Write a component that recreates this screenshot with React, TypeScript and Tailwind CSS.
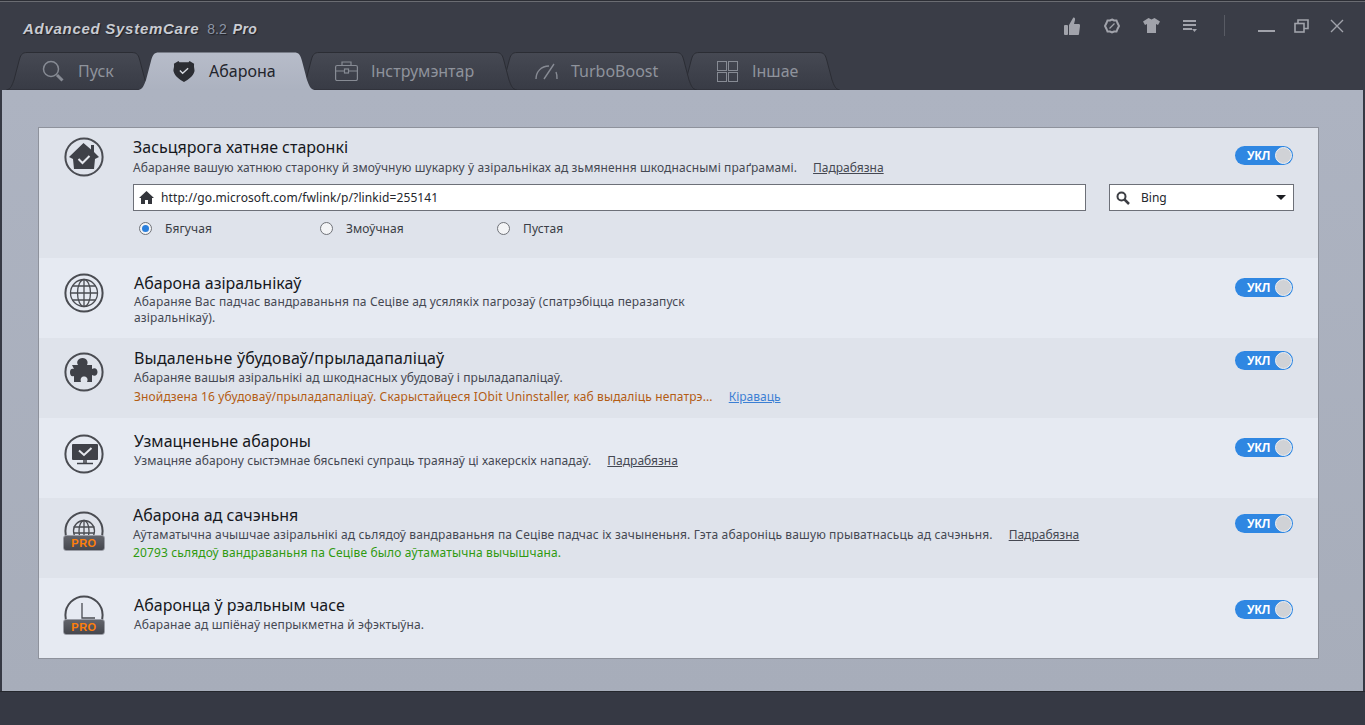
import type { ReactNode } from "react";

const FONT = "font-['Noto_Sans','Liberation_Sans',sans-serif]";

function TabShape({ w, active }: { w: number; active?: boolean }) {
  const id = active ? "tab-on" : "tab-off";
  const d = `M0.5 38 C5 37 6 33 8 28 L13 9 C14.5 3 16 0.5 21 0.5 L${w - 21} 0.5 C${w - 16} 0.5 ${w - 14.5} 3 ${w - 13} 9 L${w - 8} 28 C${w - 6} 33 ${w - 5} 37 ${w - 0.5} 38 Z`;
  return (
    <svg className="absolute inset-0" width={w} height={38} viewBox={`0 0 ${w} 38`}>
      <defs>
        <linearGradient id={id} x1="0" y1="0" x2="0" y2="1">
          <stop offset="0" stopColor={active ? "#b7bcc9" : "#464953"} />
          <stop offset="1" stopColor={active ? "#acb2c0" : "#383b45"} />
        </linearGradient>
      </defs>
      <path d={d} fill={`url(#${id})`} stroke={active ? "none" : "#2b2d34"} />
    </svg>
  );
}

function Tab({
  w,
  children,
  active,
  className,
}: {
  w: number;
  children: ReactNode;
  active?: boolean;
  className: string;
}) {
  return (
    <div className={`relative h-[38px] shrink-0 ${className}`}>
      <TabShape w={w} active={active} />
      <div
        className={`relative flex h-full items-center text-base ${
          active ? "text-[#23252c]" : "text-[#8f939c]"
        }`}
      >
        {children}
      </div>
    </div>
  );
}

function Toggle() {
  return (
    <div className="flex h-[19px] w-[58px] items-center justify-between rounded-full bg-[#2f87e2] pl-[12px] pr-[1px]">
      <span className="font-['Liberation_Sans',sans-serif] text-xs leading-none font-bold text-white">УКЛ</span>
      <span className="h-[17px] w-[17px] rounded-full border border-[#f0f1f3] bg-[#d0d2d6]" />
    </div>
  );
}

function RoundIcon({ children, pro }: { children: ReactNode; pro?: boolean }) {
  return (
    <div className="relative h-[40px] w-[42px]">
      <svg width="42" height="40" viewBox="0 0 42 40" fill="none">
        <circle cx="21" cy="20" r="18.6" stroke="#4a4c52" strokeWidth="2" />
        {children}
      </svg>
      {pro && (
        <div className="absolute top-[24px] left-0 flex h-[16px] w-[42px] items-center justify-center rounded-[3px] border border-[#9a9da6] bg-gradient-to-b from-[#62646b] to-[#45474e] font-['Liberation_Sans',sans-serif] text-[11px] font-bold tracking-[0.5px] text-[#ff7f0a]">
          PRO
        </div>
      )}
    </div>
  );
}

function Radio({ on, label, className }: { on?: boolean; label: string; className: string }) {
  return (
    <div className={`flex items-center ${className}`}>
      <span className="flex h-[13px] w-[13px] items-center justify-center rounded-full border border-[#6f7278] bg-[#f3f4f6]">
        {on && <span className="h-[7px] w-[7px] rounded-full bg-[#2a7fdc]" />}
      </span>
      <span className="ml-[13px] text-xs leading-none tracking-[0.1px] text-[#3a3d45]">{label}</span>
    </div>
  );
}

function Row({
  dark,
  icon,
  iconTop,
  textClass,
  toggleTop,
  title,
  titleClass = "",
  descClass,
  children,
}: {
  dark?: boolean;
  icon: ReactNode;
  iconTop: string;
  textClass: string;
  toggleTop: string;
  title: string;
  titleClass?: string;
  descClass: string;
  children: ReactNode;
}) {
  return (
    <div className={`flex h-[80px] ${dark ? "bg-[#dfe3eb]" : "bg-[#e6eaf2]"}`}>
      <div className={`w-[94px] shrink-0 pl-[24px] ${iconTop}`}>{icon}</div>
      <div className={`min-w-0 flex-1 ${textClass}`}>
        <div className={`text-base leading-[20px] text-[#16181d] ${titleClass}`}>{title}</div>
        <div className={`text-xs leading-[16px] text-[#454852] ${descClass}`}>{children}</div>
      </div>
      <div className={`w-[83px] shrink-0 ${toggleTop}`}>
        <Toggle />
      </div>
    </div>
  );
}

function More() {
  return <span className="ml-[16px] tracking-normal underline">Падрабязна</span>;
}

export default function App() {
  return (
    <div className={`flex h-[725px] w-[1365px] flex-col overflow-hidden bg-[#363944] ${FONT}`}>
      <header className="h-[90px] shrink-0 border-t border-[#2c2e35] bg-[#3a3d47]">
        <div className="flex h-[51px] items-start border-t border-[#6a6c72]">
          <div className="flex items-baseline pt-[16px] pl-[23px] font-['Liberation_Sans',sans-serif] text-[#c9ccd3] [text-shadow:1px_1px_1px_#1f2026]">
            <span className="text-[15px] font-bold tracking-[0.72px] italic">Advanced SystemCare</span>
            <span className="ml-[8px] text-[14px] text-[#8d96a6]">8.2</span>
            <span className="ml-[6px] text-[14px] font-bold tracking-[0.4px] italic">Pro</span>
          </div>
          <div className="ml-auto flex items-center pt-[13px] pr-[21px] text-[#a1a3ab]">
            <svg width="16" height="18" viewBox="0 0 16 18" fill="currentColor">
              <rect x="0" y="8" width="4" height="10" rx="1" />
              <path d="M5 8 L9 1 C10 0 11.5 1 11 3 L10 7 L15 7 C16 7 16 8 16 9 L15 17 C15 18 14 18 13.5 18 L5 18 Z" />
            </svg>
            <svg className="ml-[24px]" width="16" height="16" viewBox="0 0 16 16" fill="none" stroke="currentColor">
              <path strokeWidth="2" d="M8 1.5 L10 2.5 L12.5 2.5 L13.5 5 L15 8 L13.5 11 L12.5 13.5 L10 13.5 L8 14.5 L6 13.5 L3.5 13.5 L2.5 11 L1 8 L2.5 5 L3.5 2.5 L6 2.5 Z" />
              <path strokeWidth="1.3" d="M10.5 5.5 L5.5 10.5" />
            </svg>
            <svg className="ml-[23px]" width="17" height="15" viewBox="0 0 17 15" fill="currentColor">
              <path d="M5.5 0 L8.5 1.5 L11.5 0 L17 3.5 L15 7 L13 6 L13 15 L4 15 L4 6 L2 7 L0 3.5 Z" />
            </svg>
            <svg className="ml-[23px]" width="14" height="14" viewBox="0 0 14 14" fill="currentColor">
              <rect x="0" y="1" width="13" height="2" />
              <rect x="0" y="5" width="13" height="2" />
              <rect x="0" y="9" width="9" height="2" />
              <path d="M9 10 L14 10 L11.5 13 Z" />
            </svg>
            <div className="ml-[27px] h-[21px] w-px bg-[#585b64]" />
            <div className="mt-[10px] ml-[33px] h-[2px] w-[17px] bg-[#a1a3ab]" />
            <svg className="ml-[19px]" width="15" height="14" viewBox="0 0 15 14" fill="none" stroke="currentColor" strokeWidth="1.6">
              <rect x="1" y="4.5" width="9" height="8.5" />
              <path d="M4 4.5 L4 1 L14 1 L14 9.5 L10 9.5" />
            </svg>
            <svg className="ml-[21px]" width="14" height="14" viewBox="0 0 14 14" fill="none" stroke="currentColor" strokeWidth="1.4">
              <path d="M1 1 L13 13 M13 1 L1 13" />
            </svg>
          </div>
        </div>
        <div className="flex pl-[6px]">
          <Tab className="z-10 w-[147px]" w={147}>
            <svg className="ml-[36px]" width="22" height="22" viewBox="0 0 22 22" fill="none" stroke="#878b94">
              <circle cx="9" cy="9" r="7.5" strokeWidth="1.5" />
              <path d="M15 15 L20.5 20.5" strokeWidth="3" />
            </svg>
            <span className="ml-[14px]">Пуск</span>
          </Tab>
          <Tab className="z-40 -ml-[15px] w-[177px]" w={177} active>
            <svg className="ml-[34px]" width="24" height="22" viewBox="0 0 24 24" fill="#2b2d33">
              <path d="M1 4 L6 1 L7 2.5 L17 2.5 L18 1 L23 4 C22.5 8 23.5 9 23.5 12 C22 18 17 21 12 24 C7 21 2 18 0.5 12 C0.5 9 1.5 8 1 4 Z" />
              <path d="M7.5 11.5 L10.5 14.5 L16.5 9" fill="none" stroke="#d7dae1" strokeWidth="1.5" />
            </svg>
            <span className="ml-[13px]">Абарона</span>
          </Tab>
          <Tab className="z-30 -ml-[17px] w-[219px]" w={219}>
            <svg className="ml-[37px]" width="23" height="20" viewBox="0 0 23 20" fill="none" stroke="#878b94" strokeWidth="1.2">
              <rect x="0.6" y="4.5" width="21.8" height="15" rx="1.5" />
              <path d="M7 4.5 L7 1 L16 1 L16 4.5 M0.6 10 L9.5 10 M13.5 10 L22.4 10" />
              <rect x="9.5" y="8" width="4" height="4" />
            </svg>
            <span className="ml-[13px]">Інструмэнтар</span>
          </Tab>
          <Tab className="z-20 -ml-[21px] w-[201px]" w={201}>
            <svg className="ml-[39px]" width="23" height="17" viewBox="0 0 23 17" fill="none" stroke="#878b94" strokeWidth="1.4">
              <path d="M1 16 C1 9 6 3 14 3 M21 9 C22 11 22 14 22 16 M9 16 L19 1" />
            </svg>
            <span className="ml-[13px]">TurboBoost</span>
          </Tab>
          <Tab className="z-10 -ml-[19px] w-[162px]" w={162}>
            <svg className="ml-[39px]" width="21" height="21" viewBox="0 0 21 21" fill="none" stroke="#878b94">
              <rect x="0.5" y="0.5" width="9" height="9" />
              <rect x="11.5" y="0.5" width="9" height="9" />
              <rect x="0.5" y="11.5" width="9" height="9" />
              <rect x="11.5" y="11.5" width="9" height="9" />
            </svg>
            <span className="ml-[14px]">Іншае</span>
          </Tab>
        </div>
      </header>

      <main className="mx-[2px] h-[601px] shrink-0 bg-gradient-to-b from-[#adb3c1] to-[#a7adba] pt-[37px] pl-[36px]">
        <div className="w-[1281px] border border-[#8e929c] bg-[#e6eaf2]">
          <div className="h-[130px] bg-[#dfe3eb]">
            <div className="flex">
              <div className="w-[94px] shrink-0 pt-[9px] pl-[24px]">
                <RoundIcon>
                  <path d="M20.5 6 L28 12.5 L28 8 L31 8 L31 15 L36 20 L32 22 L31 32 L11 32 L10 22 L6 20 Z" fill="#3f4148" />
                  <path d="M15.5 22 L19.5 26 L26.5 19" stroke="#e6e8ee" strokeWidth="2" />
                </RoundIcon>
              </div>
              <div className="min-w-0 flex-1 pt-[9px]">
                <div className="text-base leading-[20px] text-[#16181d]">Засьцярога хатняе старонкі</div>
                <div className="mt-[3px] text-xs leading-[16px] tracking-[0.1px] text-[#454852]">
                  Абараняе вашую хатнюю старонку й змоўчную шукарку ў азіральніках ад зьмянення шкоднаснымі праґрамамі.
                  <More />
                </div>
              </div>
              <div className="w-[83px] shrink-0 pt-[18px]">
                <Toggle />
              </div>
            </div>
            <div className="mt-[7px] flex pl-[94px]">
              <div className="flex h-[27px] w-[953px] items-center border border-[#6d7078] bg-white pl-[5px]">
                <svg width="15" height="13" viewBox="0 0 15 13" fill="#33353b">
                  <path d="M7.5 0 L15 7 L13 7 L13 13 L9 13 L9 9 L6 9 L6 13 L2 13 L2 7 L0 7 Z" />
                </svg>
                <span className="ml-[7px] text-xs tracking-[0.1px] text-[#25272d]">http://go.microsoft.com/fwlink/p/?linkid=255141</span>
              </div>
              <div className="ml-[23px] flex h-[27px] w-[185px] items-center border border-[#6d7078] bg-white pl-[6px]">
                <svg width="14" height="14" viewBox="0 0 14 14" fill="none" stroke="#3c3e44">
                  <circle cx="5.5" cy="5.5" r="4" strokeWidth="2" />
                  <path d="M8.5 8.5 L13 13" strokeWidth="2.5" />
                </svg>
                <span className="ml-[11px] text-xs text-[#25272d]">Bing</span>
                <span className="mr-[7px] ml-auto h-0 w-0 border-x-[5px] border-t-[5px] border-x-transparent border-t-[#1c1d22]" />
              </div>
            </div>
            <div className="mt-[11px] flex pl-[100px]">
              <Radio on label="Бягучая" className="w-[181px]" />
              <Radio label="Змоўчная" className="w-[177px]" />
              <Radio label="Пустая" className="w-[120px]" />
            </div>
          </div>

          <Row
            iconTop="pt-[15px]"
            textClass="pt-[15px] pl-[1px]"
            toggleTop="pt-[20px]"
            title="Абарона азіральнікаў"
            descClass="mt-[1px] tracking-[0.15px]"
            icon={
              <RoundIcon>
                <circle cx="21" cy="20" r="13.5" stroke="#4a4c52" strokeWidth="1.3" />
                <ellipse cx="21" cy="20" rx="6.5" ry="13.5" stroke="#4a4c52" strokeWidth="1.3" />
                <path d="M21 6.5 L21 33.5 M7.5 20 L34.5 20 M9.5 13 L32.5 13 M9.5 27 L32.5 27" stroke="#4a4c52" strokeWidth="1.3" />
              </RoundIcon>
            }
          >
            Абараняе Вас падчас вандраваньня па Сеціве ад усялякіх пагрозаў (спатрэбіцца перазапуск
            <br />
            азіральнікаў).
          </Row>

          <Row
            dark
            iconTop="pt-[14px]"
            textClass="pt-[10px] pl-[1px]"
            toggleTop="pt-[13px]"
            title="Выдаленьне ўбудоваў/прыладапаліцаў"
            titleClass="tracking-[0.2px]"
            descClass="mt-[2px] tracking-[0.09px]"
            icon={
              <RoundIcon>
                <path d="M9 13 L15 13 C13 10 15 6 19.5 6 C24 6 25.5 10 24 13 L29 13 L29 17 C32 15 34.5 17 34.5 20 C34.5 23 32 25 29 23 L29 30 L24 30 C25.5 27 24 24.5 21 24.5 C18 24.5 17 27 18 30 L11 30 L11 24 C8 25 7 23 7 20 C7 17 9 16 11 17 Z" fill="#3f4148" />
              </RoundIcon>
            }
          >
            Абараняе вашыя азіральнікі ад шкоднасных убудоваў і прыладапаліцаў.
            <div className="mt-[3px] tracking-[0.13px] text-[#b35c14]">
              Знойдзена 16 убудоваў/прыладапаліцаў. Скарыстайцеся IObit Uninstaller, каб выдаліць непатрэ...
              <span className="ml-[16px] tracking-normal text-[#3b7fd4] underline">Кіраваць</span>
            </div>
          </Row>

          <Row
            iconTop="pt-[16px]"
            textClass="pt-[13px] pl-[1px]"
            toggleTop="pt-[20px]"
            title="Узмацненьне абароны"
            descClass="mt-[2px] tracking-[0.08px]"
            icon={
              <RoundIcon>
                <rect x="9" y="10" width="26" height="16" rx="1" fill="#3f4148" />
                <path d="M16 16.5 L21 21 L28.5 14" stroke="#e6e8ee" strokeWidth="2" />
                <path d="M21 26 L21 29 M23 26 L23 29 M14 29.5 L30 29.5" stroke="#3f4148" strokeWidth="1.5" />
              </RoundIcon>
            }
          >
            Узмацняе абарону сыстэмнае бясьпекі супраць траянаў ці хакерскіх нападаў.
            <More />
          </Row>

          <Row
            dark
            iconTop="pt-[13px]"
            textClass="pt-[7px]"
            toggleTop="pt-[16px]"
            title="Абарона ад сачэньня"
            descClass="mt-[2px] tracking-[0.135px]"
            icon={
              <RoundIcon pro>
                <circle cx="21" cy="20" r="10.5" stroke="#4a4c52" strokeWidth="1.3" />
                <ellipse cx="21" cy="20" rx="5" ry="10.5" stroke="#4a4c52" strokeWidth="1.3" />
                <path d="M21 9.5 L21 24 M10.5 16 L31.5 16 M11 22 L31 22" stroke="#4a4c52" strokeWidth="1.3" />
              </RoundIcon>
            }
          >
            Аўтаматычна ачышчае азіральнікі ад сьлядоў вандраваньня па Сеціве падчас іх зачыненьня. Гэта абароніць вашую прыватнасьць ад сачэньня.
            <More />
            <div className="mt-[2px] tracking-[0.14px] text-[#2f9a10]">20793 сьлядоў вандраваньня па Сеціве было аўтаматычна вычышчана.</div>
          </Row>

          <Row
            iconTop="pt-[17px]"
            textClass="pt-[17px] pl-[1px]"
            toggleTop="pt-[22px]"
            title="Абаронца ў рэальным часе"
            descClass="mt-[2px] tracking-[0.11px]"
            icon={
              <RoundIcon pro>
                <path d="M19 8 L19 23 L32 23" stroke="#4a4c52" strokeWidth="1.3" />
              </RoundIcon>
            }
          >
            Абаранае ад шпіёнаў непрыкметна й эфэктыўна.
          </Row>
        </div>
      </main>
      <div className="h-px bg-[#25272d]" />
    </div>
  );
}
